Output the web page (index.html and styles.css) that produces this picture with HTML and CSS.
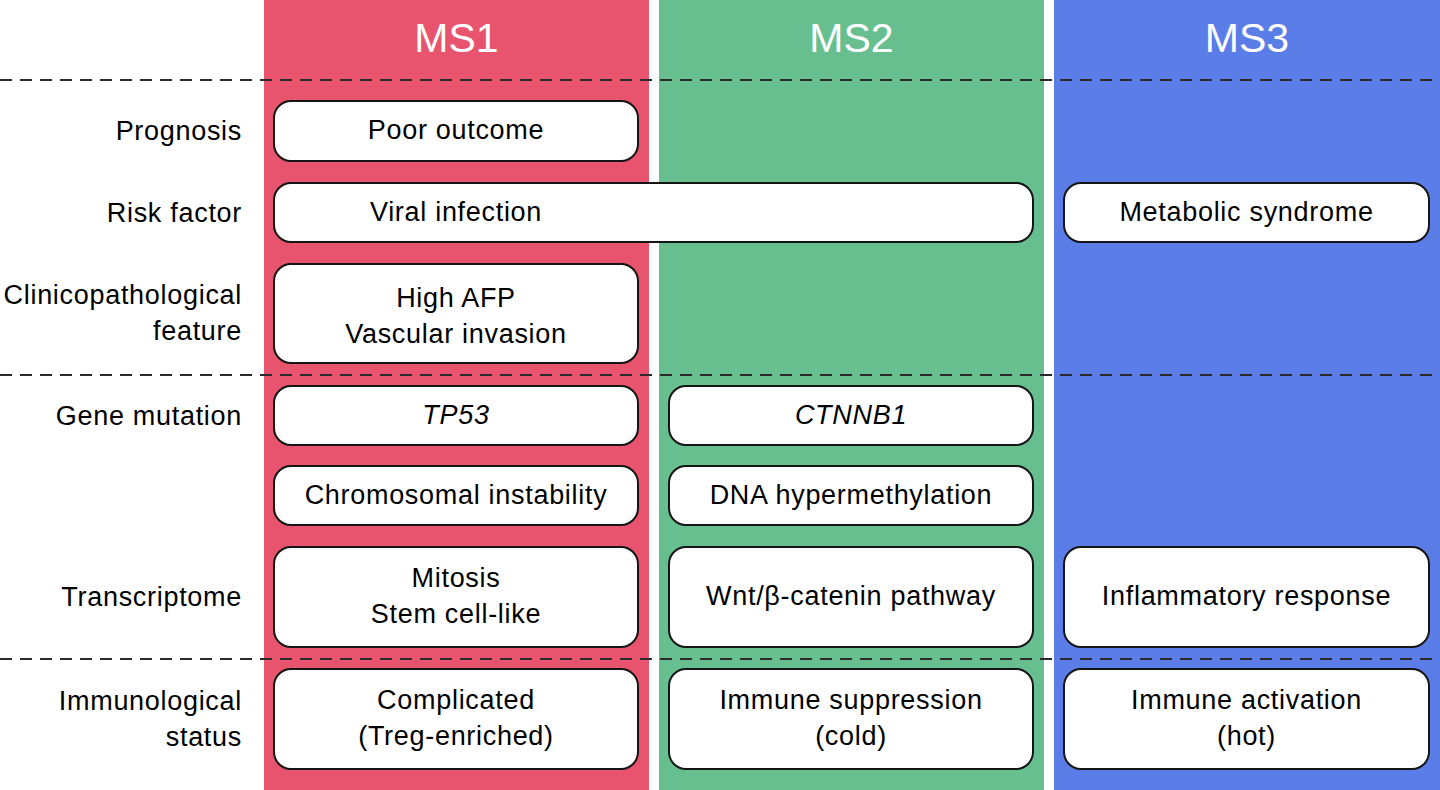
FILE: index.html
```html
<!DOCTYPE html>
<html lang="en">
<head>
<meta charset="utf-8">
<title>HCC molecular subtypes</title>
<link rel="stylesheet" href="styles.css">
</head>
<body>
<main class="chart">
  <div class="colbg ms1"></div>
  <div class="colbg ms2"></div>
  <div class="colbg ms3"></div>

  <div class="head c1">MS1</div>
  <div class="head c2">MS2</div>
  <div class="head c3">MS3</div>

  <div class="dash r-line1"></div>

  <div class="label r-prog h62">Prognosis</div>
  <div class="box r-prog h62 c1">Poor outcome</div>

  <div class="label r-risk h61">Risk factor</div>
  <div class="box r-risk h61 c12 offset">Viral infection</div>
  <div class="box r-risk h61 c3">Metabolic syndrome</div>

  <div class="label r-clin h101 lower">Clinicopathological<br>feature</div>
  <div class="box r-clin h101 c1 lower">High AFP<br>Vascular invasion</div>

  <div class="dash r-line2"></div>

  <div class="label r-gene h61">Gene mutation</div>
  <div class="box r-gene h61 c1"><i>TP53</i></div>
  <div class="box r-gene h61 c2"><i>CTNNB1</i></div>

  <div class="box r-chrom h61 c1">Chromosomal instability</div>
  <div class="box r-chrom h61 c2">DNA hypermethylation</div>

  <div class="label r-trans h102">Transcriptome</div>
  <div class="box r-trans h102 c1">Mitosis<br>Stem cell-like</div>
  <div class="box r-trans h102 c2">Wnt/β-catenin pathway</div>
  <div class="box r-trans h102 c3">Inflammatory response</div>

  <div class="dash r-line3"></div>

  <div class="label r-imm h102">Immunological<br>status</div>
  <div class="box r-imm h102 c1">Complicated<br>(Treg-enriched)</div>
  <div class="box r-imm h102 c2">Immune suppression<br>(cold)</div>
  <div class="box r-imm h102 c3">Immune activation<br>(hot)</div>
</main>
</body>
</html>
```

FILE: styles.css
```css
* { box-sizing: border-box; }

html, body {
  margin: 0;
  padding: 0;
  background: #ffffff;
}

body {
  font-family: "Liberation Sans", Arial, sans-serif;
  color: #000;
  width: 1440px;
  height: 790px;
  overflow: hidden;
}

.chart {
  display: grid;
  grid-template-columns: 254px 385px 385px 386px;
  column-gap: 10px;
  grid-template-rows: 79px 2px 81px 81px 121px 12px 70px 80px 122px 12px 110px 20px;
  width: 1440px;
  height: 790px;
}

.colbg { grid-row: 1 / -1; }
.colbg.ms1 { grid-column: 2; background: #e8546e; }
.colbg.ms2 { grid-column: 3; background: #67bf8f; }
.colbg.ms3 { grid-column: 4; background: #5b7de8; }

.c1 { grid-column: 2; }
.c2 { grid-column: 3; }
.c3 { grid-column: 4; }
.c12 { grid-column: 2 / 4; }

.head {
  grid-row: 1;
  display: flex;
  align-items: center;
  justify-content: center;
  color: #fff;
  font-size: 41px;
  padding-bottom: 3px;
  position: relative;
}

.dash {
  grid-column: 1 / -1;
  height: 2px;
  align-self: end;
  background: repeating-linear-gradient(to right, #2a2a2a 0 12px, transparent 12px 20px);
  position: relative;
}

.r-line1 { grid-row: 2; }
.r-line2 { grid-row: 6; }
.r-line3 { grid-row: 10; }

.r-prog { grid-row: 3; }
.r-risk { grid-row: 4; }
.r-clin { grid-row: 5; }
.r-gene { grid-row: 7; }
.r-chrom { grid-row: 8; }
.r-trans { grid-row: 9; }
.r-imm { grid-row: 11; }

.h61 { height: 61px; }
.h62 { height: 62px; }
.h101 { height: 101px; }
.h102 { height: 102px; }

.label,
.box {
  align-self: end;
  display: flex;
  align-items: center;
  font-size: 27px;
  letter-spacing: 0.7px;
  line-height: 36px;
  position: relative;
}

.label {
  grid-column: 1;
  justify-content: flex-end;
  text-align: right;
  padding-right: 12px;
}

.box {
  justify-content: center;
  text-align: center;
  margin: 0 10px 0 9px;
  background: #fff;
  border: 2px solid #151515;
  border-radius: 18px;
  padding-bottom: 2px;
}

.box.lower {
  padding-bottom: 0;
  padding-top: 5px;
}

.label.lower {
  padding-bottom: 2px;
}

.box.offset {
  padding-right: 395px;
}

.box i { font-style: italic; }
```
